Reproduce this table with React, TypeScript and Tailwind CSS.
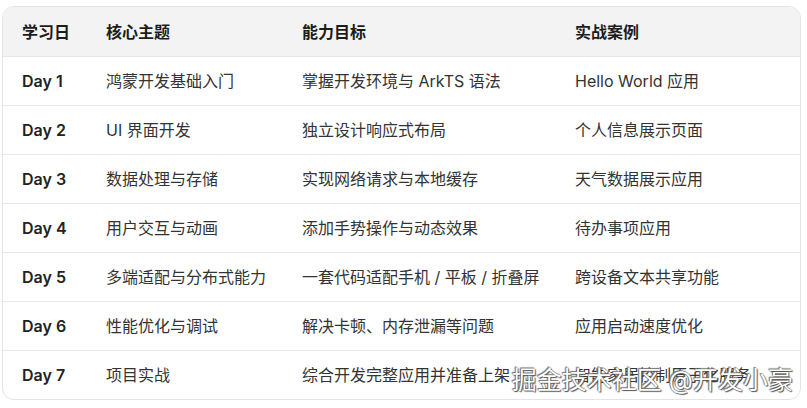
const rows = [
  ["Day 1", "鸿蒙开发基础入门", "掌握开发环境与 ArkTS 语法", "Hello World 应用"],
  ["Day 2", "UI 界面开发", "独立设计响应式布局", "个人信息展示页面"],
  ["Day 3", "数据处理与存储", "实现网络请求与本地缓存", "天气数据展示应用"],
  ["Day 4", "用户交互与动画", "添加手势操作与动态效果", "待办事项应用"],
  ["Day 5", "多端适配与分布式能力", "一套代码适配手机 / 平板 / 折叠屏", "跨设备文本共享功能"],
  ["Day 6", "性能优化与调试", "解决卡顿、内存泄漏等问题", "应用启动速度优化"],
  ["Day 7", "项目实战", "综合开发完整应用并准备上架", "智能家居控制原子化服务"],
];

const grid = "grid grid-cols-[84px_196px_273px_1fr] items-center px-[19px]";

export default function App() {
  return (
    <div
      className="relative h-[408px] w-[807px] overflow-hidden bg-white pt-[6px] pl-[2px]"
      style={{ fontFamily: 'Inter, "Noto Sans CJK SC", sans-serif' }}
    >
      <div className="w-[799px] overflow-hidden rounded-[12px] border border-[#e4e4e4]">
        <div className={`${grid} h-[49px] bg-[#f3f3f3] text-[16px] font-semibold text-[#1c1c1c]`}>
          <span>学习日</span>
          <span>核心主题</span>
          <span>能力目标</span>
          <span>实战案例</span>
        </div>
        {rows.map((r) => (
          <div
            key={r[0]}
            className={`${grid} h-[49px] border-t border-[#e8e8e8] text-[16px] text-[#333]`}
          >
            <span className="font-semibold text-[#222]">{r[0]}</span>
            <span>{r[1]}</span>
            <span>{r[2]}</span>
            <span className="whitespace-nowrap">{r[3]}</span>
          </div>
        ))}
      </div>

      {/* watermark */}
      <div className="absolute bottom-[15px] right-[14px] text-[25px] leading-none text-white [text-shadow:0_0_1px_#444,1px_1px_1px_#555,-1px_-1px_1px_#777]">
        掘金技术社区 @开发小豪
      </div>
    </div>
  );
}
